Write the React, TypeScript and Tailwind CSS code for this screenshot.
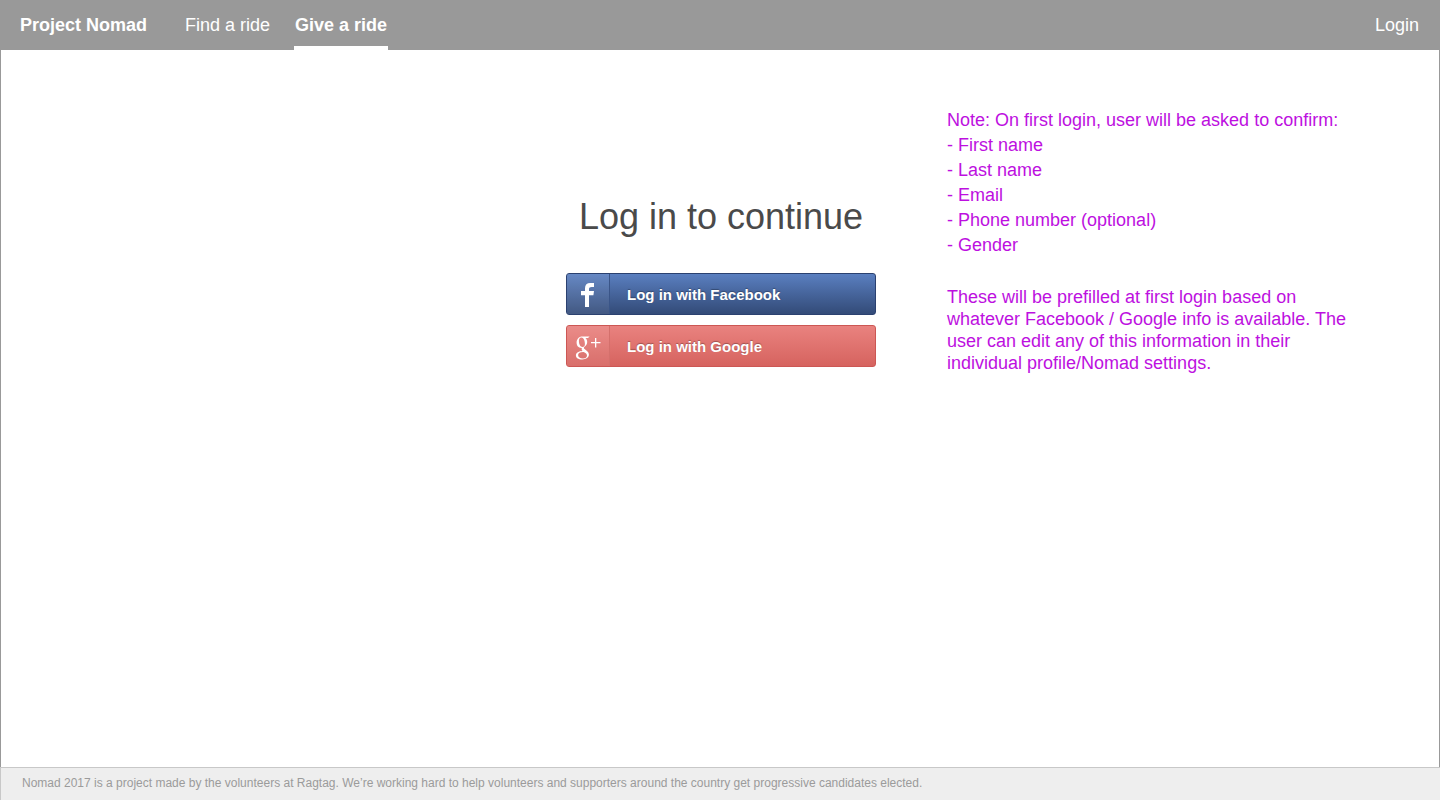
import type { ReactNode } from "react";

function FacebookIcon() {
  return (
    <svg viewBox="0 0 42 40" className="h-10 w-[42px]" fill="#ffffff" aria-hidden="true">
      <path d="M18 33V21.2H14V17H18V14.2C18 10.8 20 9 23.2 9H27V13H24.6C22.8 13 22 13.7 22 15V17H27L26.4 21.2H22V33Z" />
    </svg>
  );
}

function GoogleIcon() {
  return (
    <svg viewBox="0 0 42 40" className="h-10 w-[42px]" fill="#ffffff" aria-hidden="true">
      <path
        fillRule="evenodd"
        d="M15.2 10.6H22.6L21 12H18.4C19.6 13 20.2 14.4 20.2 16C20.2 18.2 19 19.5 17.8 20.5C16.6 21.5 16.6 22.2 17.6 23C19.6 24.6 21.9 25.9 21.9 28.6C21.9 31.4 19.3 33.4 15.2 33.4C11.3 33.4 8.9 31.8 8.9 29.4C8.9 26.4 12 25.1 15.6 24.9C14.6 24 14.4 23 14.9 21.9C11.6 22.1 9.6 19.8 9.6 16.8C9.6 13.2 12 10.6 15.2 10.6ZM14.4 11.6C12.7 11.6 11.9 12.9 11.9 14.9C11.9 17.9 13.4 20.9 15.5 20.9C17.2 20.9 17.9 19.6 17.9 17.9C17.9 15 16.7 11.6 14.4 11.6ZM16.6 25.9C13.2 25.8 11.1 26.8 11.1 29C11.1 31.1 13.1 32.4 15.9 32.4C18.5 32.4 20 31.3 20 29.4C20 27.8 18.8 27.1 16.6 25.9Z"
      />
      <path d="M28 12H29.3V16H33.5V17.3H29.3V21.5H28V17.3H24V16H28Z" />
    </svg>
  );
}

type LoginButtonProps = {
  label: string;
  icon: ReactNode;
  className: string;
  dividerClassName: string;
};

function LoginButton({ label, icon, className, dividerClassName }: LoginButtonProps) {
  return (
    <button
      type="button"
      className={`flex h-[42px] w-full cursor-pointer items-stretch rounded-[3px] border bg-linear-to-b text-left ${className}`}
    >
      <span className={`flex items-center border-r bg-white/8 ${dividerClassName}`}>{icon}</span>
      <span className="self-center pt-0.5 pl-[17px] text-[15px] leading-5 font-bold text-white text-shadow-[0_-1px_1px_rgba(0,0,0,0.3)]">
        {label}
      </span>
    </button>
  );
}

const confirmedFields = ["First name", "Last name", "Email", "Phone number (optional)", "Gender"];

export default function App() {
  return (
    <div className="flex min-h-screen flex-col bg-white font-['Liberation_Sans',Arial,sans-serif]">
      <header className="flex h-[50px] items-stretch bg-[#999999] px-5 text-lg text-white">
        <a href="#home" className="flex items-center font-bold">
          Project Nomad
        </a>
        <nav className="ml-[38px] flex gap-6">
          <a href="#find" className="flex items-center">
            Find a ride
          </a>
          <a href="#give" className="flex items-center border-b-4 border-white px-px pt-1 font-bold">
            Give a ride
          </a>
        </nav>
        <a href="#login" className="ml-auto flex items-center pr-px">
          Login
        </a>
      </header>

      <main className="grid grow grid-cols-[1fr_310px_1fr] items-start gap-x-[71px] border-x border-[#999999] pl-0.5">
        <section className="col-start-2 flex flex-col gap-[10px] pt-[147px]">
          <h1 className="mb-[26px] text-center text-4xl leading-10 whitespace-nowrap text-[#4a4a4a]">
            Log in to continue
          </h1>
          <LoginButton
            label="Log in with Facebook"
            icon={<FacebookIcon />}
            className="border-[#2b4170] from-[#5a7fc0] to-[#334b78]"
            dividerClassName="border-[#3a5588]"
          />
          <LoginButton
            label="Log in with Google"
            icon={<GoogleIcon />}
            className="border-[#cc5754] from-[#e9827f] to-[#d6635f]"
            dividerClassName="border-[#d4706c]"
          />
        </section>

        <aside className="max-w-[410px] pt-[58px] text-lg text-[#bd10e0]">
          <p className="leading-[25px]">Note: On first login, user will be asked to confirm:</p>
          <ul className="leading-[25px]">
            {confirmedFields.map((field) => (
              <li key={field}>- {field}</li>
            ))}
          </ul>
          <p className="mt-7 leading-[22px]">
            These will be prefilled at first login based on whatever Facebook / Google info is available. The user can
            edit any of this information in their individual profile/Nomad settings.
          </p>
        </aside>
      </main>

      <footer className="border-t border-l border-[#c8c8c8] bg-[#eeeeee] px-[21px] pt-[7px] pb-[9px] text-xs text-[#9b9b9b]">
        Nomad 2017 is a project made by the volunteers at Ragtag. We’re working hard to help volunteers and supporters
        around the country get progressive candidates elected.
      </footer>
    </div>
  );
}
